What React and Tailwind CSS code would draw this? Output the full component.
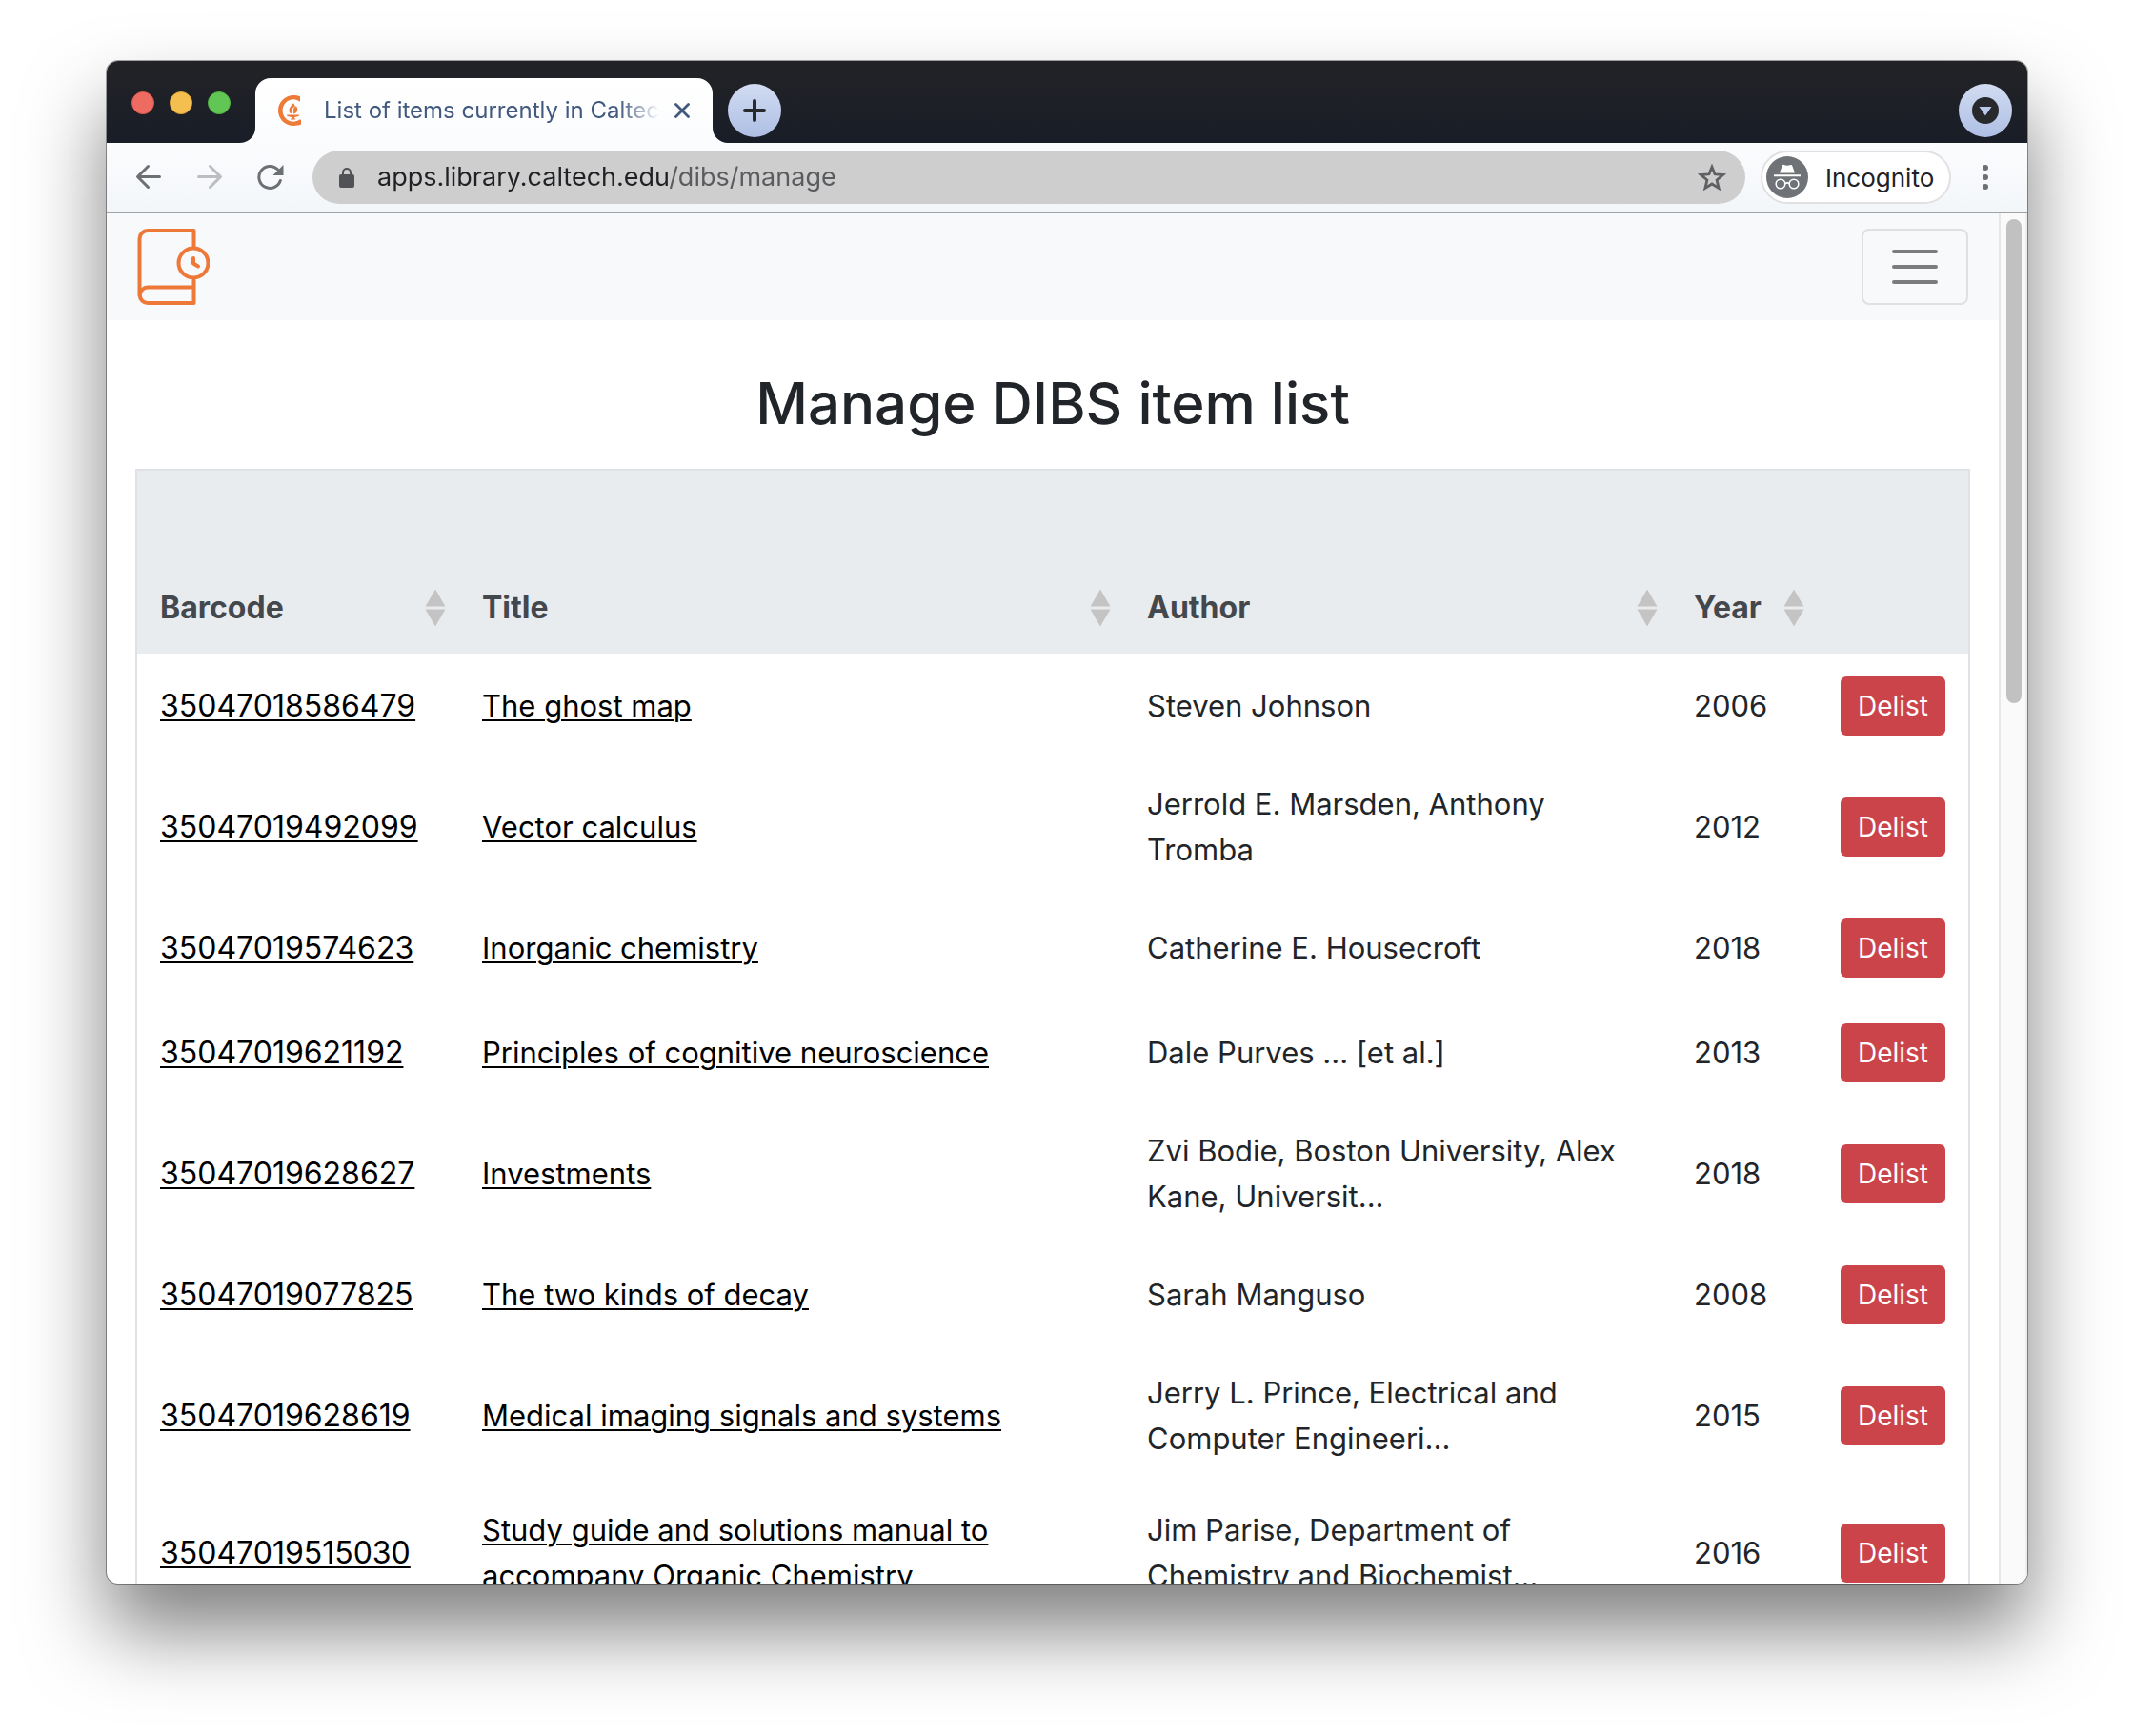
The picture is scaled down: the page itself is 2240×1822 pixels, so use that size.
const ITEMS = [
  { barcode: "35047018586479", title: "The ghost map", author: "Steven Johnson", year: "2006" },
  { barcode: "35047019492099", title: "Vector calculus", author: "Jerrold E. Marsden, Anthony Tromba", year: "2012" },
  { barcode: "35047019574623", title: "Inorganic chemistry", author: "Catherine E. Housecroft", year: "2018" },
  { barcode: "35047019621192", title: "Principles of cognitive neuroscience", author: "Dale Purves ... [et al.]", year: "2013" },
  { barcode: "35047019628627", title: "Investments", author: "Zvi Bodie, Boston University, Alex Kane, Universit...", year: "2018" },
  { barcode: "35047019077825", title: "The two kinds of decay", author: "Sarah Manguso", year: "2008" },
  { barcode: "35047019628619", title: "Medical imaging signals and systems", author: "Jerry L. Prince, Electrical and Computer Engineeri...", year: "2015" },
  { barcode: "35047019515030", title: "Study guide and solutions manual to accompany Organic Chemistry", author: "Jim Parise, Department of Chemistry and Biochemist...", year: "2016" },
];

function TabCurve({ className, d }) {
  return (
    <svg className={className} width="16" height="16" viewBox="0 0 16 16" fill="#fcfdfe" aria-hidden="true">
      <path d={d} />
    </svg>
  );
}

function Favicon() {
  return (
    <svg className="shrink-0" width="24" height="32" viewBox="0 0 24 32" fill="#ed7a37" aria-hidden="true">
      <path d="M23 1.200v5l-.8.300C20.300 5 18.200 4.300 16 4.300 9.600 4.300 4.600 9.500 4.600 16S9.600 27.700 16 27.700c2.400 0 4.600-.8 6.400-2.200l1.600.2v4.900c-2.400 1-5 1.400-7.600 1.400C7.200 32 0 25 0 16S7.200 0 16.400 0c2.300 0 4.500.4 6.600 1.200Z" />
      <path d="M16 8.200c-2.600 2.900-4.600 5-4.600 7.500 0 1.900 1 3.200 3 3.800-.9-3 .4-6.100 2.400-8-.8 3-.9 5.500-.6 8 2.300-.4 4-2 4-4.400 0-1.700-.6-3.200-1.600-4.400-.1 1-.3 1.900-.8 2.600.1-2-.4-3.800-1.800-5.100Z" />
      <path d="M9 20.600h13l-.4 1.300-4.400 1v1.500h1v1.200H13v-1.200h1v-1.500l-4.500-1Z" />
    </svg>
  );
}

function BookLogo() {
  return (
    <svg width="76" height="80" viewBox="0 0 76 80" fill="none" stroke="#ed7837" strokeWidth="4" strokeLinejoin="round" strokeLinecap="round" aria-hidden="true">
      <path d="M59.500 18V2H11a8.500 8.500 0 0 0-8.500 8.500V70" />
      <path d="M59.500 54v24H11a8.200 8.200 0 0 1 0-16.400h48" />
      <circle cx="59" cy="36" r="15.500" />
      <path d="M59 31v5.500l5 3" />
    </svg>
  );
}

function SortIcon() {
  return (
    <svg width="22" height="40" viewBox="0 0 22 40" fill="#c4c4c4" aria-hidden="true">
      <path d="M11 0.500 21.500 18.500H.5Z" />
      <path d="M11 39.500 21.500 21.500H.5Z" />
    </svg>
  );
}

function TitleBar() {
  return (
    <div className="flex h-[86px] items-end bg-linear-to-b from-[#222326] to-[#191d27] pr-4">
      <div className="mb-[30px] flex w-[156px] shrink-0 gap-4 pl-[26px]">
        <button aria-label="Close window" className="size-6 rounded-full border border-[#d9594f] bg-[#ed6b60]" />
        <button aria-label="Minimize window" className="size-6 rounded-full border border-[#dba53c] bg-[#f5bf4f]" />
        <button aria-label="Zoom window" className="size-6 rounded-full border border-[#52b043] bg-[#62c655]" />
      </div>
      <div className="relative flex h-[68px] w-[480px] items-center rounded-t-2xl bg-linear-to-b from-white to-[#fbfcfe] pr-6 pl-6">
        <TabCurve className="absolute bottom-0 -left-4" d="M16 0v16H0A16 16 0 0 0 16 0Z" />
        <TabCurve className="absolute -right-4 bottom-0" d="M0 0v16h16A16 16 0 0 1 0 0Z" />
        <Favicon />
        <span className="ml-6 flex-1 overflow-hidden mask-r-from-[310px] mask-r-to-[352px] text-2xl whitespace-nowrap text-[#42597f]">
          List of items currently in Caltech DIBS
        </span>
        <button aria-label="Close tab" className="ml-4">
          <svg width="16" height="16" viewBox="0 0 16 16" stroke="#42597f" strokeWidth="2.800" strokeLinecap="round" aria-hidden="true">
            <path d="M1.500 1.500l13 13M14.500 1.500l-13 13" />
          </svg>
        </button>
      </div>
      <button aria-label="New tab" className="mb-[6px] ml-4 flex size-14 items-center justify-center rounded-full bg-linear-to-b from-[#d2dcf2] to-[#aebfe4]">
        <svg width="24" height="24" viewBox="0 0 24 24" stroke="#28292c" strokeWidth="4" strokeLinecap="round" aria-hidden="true">
          <path d="M12 2v20M2 12h20" />
        </svg>
      </button>
      <button aria-label="Search tabs" className="mb-[6px] ml-auto flex size-14 items-center justify-center rounded-full bg-linear-to-b from-[#d2dcf2] to-[#aebfe4]">
        <svg width="28" height="28" viewBox="0 0 28 28" aria-hidden="true">
          <circle cx="14" cy="14" r="14" fill="#28292c" />
          <path d="M7.500 10h13L14 19.500Z" fill="#bccaea" />
        </svg>
      </button>
    </div>
  );
}

function Toolbar() {
  return (
    <div className="flex h-[74px] items-center border-b-2 border-[#a1a3a6] bg-linear-to-b from-[#fbfcfe] to-[#f3f6f9] pr-6 pl-[30px]">
      <button aria-label="Back" className="flex w-7 justify-center">
        <svg width="28" height="28" viewBox="0 0 28 28" fill="none" stroke="#6c6f73" strokeWidth="3" strokeLinecap="round" strokeLinejoin="round" aria-hidden="true">
          <path d="M25.500 13.500H3M13.500 2.500l-11 11 11 11" />
        </svg>
      </button>
      <button aria-label="Forward" className="ml-9 flex w-7 justify-center">
        <svg width="28" height="28" viewBox="0 0 28 28" fill="none" stroke="#bbbdc0" strokeWidth="3" strokeLinecap="round" strokeLinejoin="round" aria-hidden="true">
          <path d="M2.500 13.500H25M14.500 2.500l11 11-11 11" />
        </svg>
      </button>
      <button aria-label="Reload" className="ml-9 flex w-7 justify-center">
        <svg width="28" height="28" viewBox="0 0 28 28" fill="none" aria-hidden="true">
          <path d="M24.300 17.500A11.500 11.500 0 1 1 21.500 5.800" stroke="#6c6f73" strokeWidth="3" strokeLinecap="round" />
          <path d="M27.500 1v11h-11Z" fill="#6c6f73" />
        </svg>
      </button>
      <div className="ml-[30px] flex h-14 flex-1 items-center rounded-full bg-[#cecece] pr-5 pl-7">
        <svg className="shrink-0" width="16" height="21" viewBox="0 0 16 21" aria-hidden="true">
          <rect x="0" y="7" width="16" height="14" rx="2" fill="#515255" />
          <path d="M4 8V5a4 4 0 0 1 8 0v3" fill="none" stroke="#515255" strokeWidth="2" />
        </svg>
        <input
          aria-label="Address"
          defaultValue="apps.library.caltech.edu/dibs/manage"
          className="ml-6 min-w-0 flex-1 bg-linear-to-r from-[#202124] from-[306px] to-[#5a5b5e] to-[306px] bg-clip-text text-[27px] text-transparent outline-none"
        />
        <button aria-label="Bookmark this page">
          <svg width="30" height="28" viewBox="0 0 30 28" fill="none" stroke="#5f6063" strokeWidth="2.800" aria-hidden="true">
            <path d="M15 3.200l3 7.600 8.600.7-6.500 5.500 2 8.400L15 21l-7.100 4.400 2-8.400-6.500-5.500 8.600-.7Z" />
          </svg>
        </button>
      </div>
      <button className="ml-4 flex h-14 w-[200px] items-center rounded-full border-2 border-[#e0e1e3] bg-white pl-1 text-[26px] text-[#202124]">
        <svg className="mr-[18px]" width="44" height="44" viewBox="0 0 44 44" aria-hidden="true">
          <circle cx="22" cy="22" r="22" fill="#6f7276" />
          <path d="M14 17.500l2.800-7.800c.3-.8 1-1 1.700-.7 2.300 1 4.700 1 7 0 .7-.3 1.400 0 1.700.7L30 17.500Z" fill="#fff" />
          <path d="M8 19.200h28v2H8Z" fill="#fff" />
          <g fill="none" stroke="#fff" strokeWidth="1.600">
            <circle cx="15" cy="29" r="4.800" />
            <circle cx="29" cy="29" r="4.800" />
            <path d="M19.800 28.500q2.200-1.300 4.400 0" />
          </g>
        </svg>
        Incognito
      </button>
      <button aria-label="Menu" className="ml-4 flex w-10 flex-col items-center gap-1">
        <span className="size-[6px] rounded-full bg-[#6c6f73]" />
        <span className="size-[6px] rounded-full bg-[#6c6f73]" />
        <span className="size-[6px] rounded-full bg-[#6c6f73]" />
      </button>
    </div>
  );
}

function HeaderCell({ children }) {
  return (
    <th scope="col" className="pr-[14px] pb-6 pl-6 text-left align-bottom">
      <button className="flex h-12 w-full items-center justify-between text-[32px] font-bold">
        {children}
        <SortIcon />
      </button>
    </th>
  );
}

function ItemRow({ item }) {
  return (
    <tr>
      <td className="py-6 pl-6 text-[32px] leading-[48px]">
        <a href="#item" className="text-black underline decoration-2 underline-offset-3">{item.barcode}</a>
      </td>
      <td className="py-6 pr-12 pl-6">
        <a href="#title" className="text-black underline decoration-2 underline-offset-3">{item.title}</a>
      </td>
      <td className="py-6 pr-12 pl-6">{item.author}</td>
      <td className="py-6 pl-6">{item.year}</td>
      <td className="p-6">
        <button className="flex h-[62px] w-full items-center justify-center rounded-md bg-[#cb444a] text-[28px] text-white">
          Delist
        </button>
      </td>
    </tr>
  );
}

export default function App() {
  return (
    <div className="flex h-screen flex-col bg-white px-28 pt-16 pb-40 font-[Inter,sans-serif]">
      <div className="flex min-h-0 flex-1 flex-col overflow-hidden rounded-xl bg-white shadow-[0_0_0_1px_rgba(0,0,0,0.35),0_49px_84px_rgba(0,0,0,0.5)]">
        <TitleBar />
        <Toolbar />
        <div className="flex min-h-0 flex-1">
          <main className="min-w-0 flex-1 overflow-hidden">
            <nav className="flex h-28 items-center justify-between bg-[#f8f9fb] px-8">
              <a href="#home" aria-label="DIBS home">
                <BookLogo />
              </a>
              <button aria-label="Toggle navigation" className="flex h-20 w-28 flex-col items-center justify-center gap-3 rounded-lg border-2 border-[#dfe0e2]">
                <span className="h-1 w-12 rounded-full bg-[#7b7c7c]" />
                <span className="h-1 w-12 rounded-full bg-[#7b7c7c]" />
                <span className="h-1 w-12 rounded-full bg-[#7b7c7c]" />
              </button>
            </nav>
            <h1 className="pt-12 text-center text-[60px] leading-[78px] font-medium text-[#212529]">Manage DIBS item list</h1>
            <div className="mx-[30px] mt-[30px] border-2 border-[#dee2e6]">
              <table className="w-full table-fixed text-[31px] leading-[48px] text-[#212529]">
                <colgroup>
                  <col className="w-[338px]" />
                  <col className="w-[698px]" />
                  <col />
                  <col className="w-[154px]" />
                  <col className="w-[158px]" />
                </colgroup>
                <thead>
                  <tr className="h-48 bg-[#e8ecef] text-[#44484c]">
                    <HeaderCell>Barcode</HeaderCell>
                    <HeaderCell>Title</HeaderCell>
                    <HeaderCell>Author</HeaderCell>
                    <HeaderCell>Year</HeaderCell>
                    <td />
                  </tr>
                </thead>
                <tbody>
                  {ITEMS.map((item) => (
                    <ItemRow key={item.barcode} item={item} />
                  ))}
                </tbody>
              </table>
            </div>
          </main>
          <div className="w-[30px] shrink-0 border-r-2 border-l-2 border-r-[#eeeeee] border-l-[#e7e7e7] bg-[#fafafa] pt-[6px] pr-1 pl-[6px]">
            <div className="h-[508px] rounded-full bg-[#c1c1c1]" />
          </div>
        </div>
      </div>
    </div>
  );
}
